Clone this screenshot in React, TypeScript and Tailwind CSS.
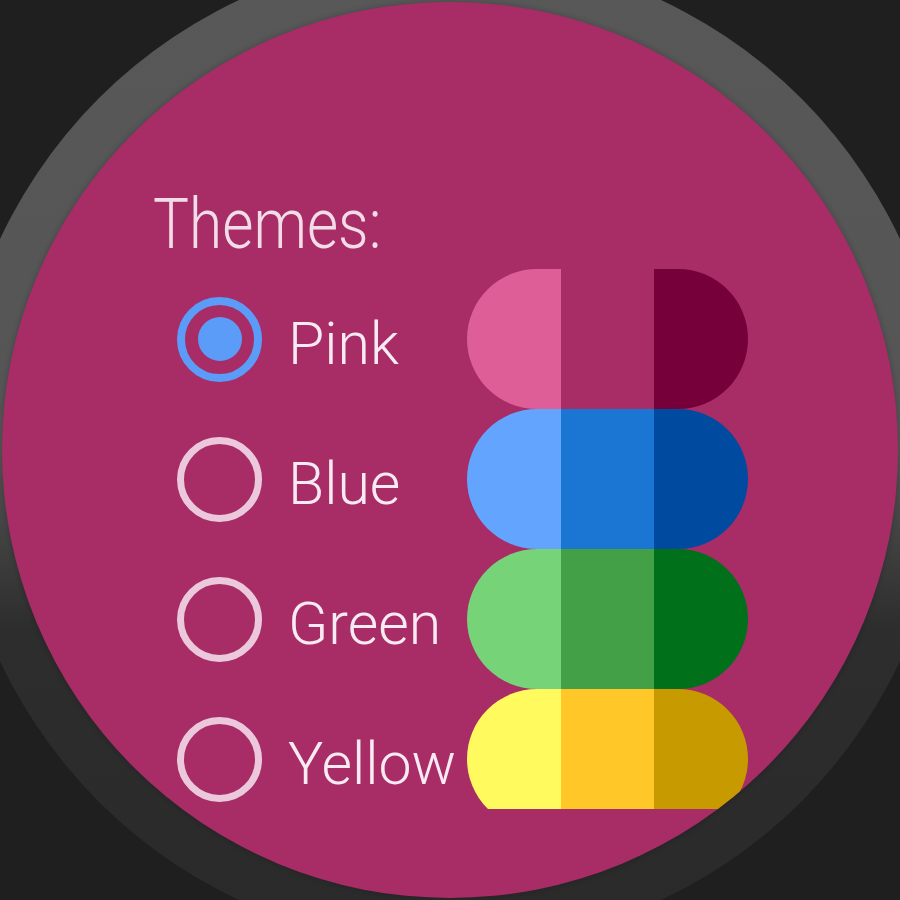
type Theme = {
  name: string;
  light: string;
  mid: string;
  dark: string;
};

const themes: Theme[] = [
  { name: "Pink", light: "bg-[#de5f97]", mid: "bg-[#a82c66]", dark: "bg-[#75003a]" },
  { name: "Blue", light: "bg-[#63a4ff]", mid: "bg-[#1b76d3]", dark: "bg-[#004ba0]" },
  { name: "Green", light: "bg-[#76d378]", mid: "bg-[#43a047]", dark: "bg-[#00701a]" },
  { name: "Yellow", light: "bg-[#fffa5e]", mid: "bg-[#ffc828]", dark: "bg-[#c79a00]" },
];

const Radio = ({ checked }: { checked: boolean }) => {
  if (checked) {
    return (
      <div className="w-[85px] h-[85px] shrink-0 rounded-full border-[8px] border-[#5b9cf8] flex items-center justify-center">
        <div className="w-[44px] h-[44px] rounded-full bg-[#5b9cf8]" />
      </div>
    );
  }
  return <div className="w-[85px] h-[85px] shrink-0 rounded-full border-[7px] border-[#ecc8dc]" />;
};

const App = () => {
  return (
    <div className="w-[900px] h-[900px] bg-[#1f1f1f] overflow-hidden flex items-center justify-center font-['Roboto','Noto_Sans',sans-serif]">
      <div className="w-[994px] h-[994px] shrink-0 rounded-full bg-[linear-gradient(to_bottom,#585858_0%,#555555_50%,#2d2d2d_68%,#2a2a2a_100%)] flex items-center justify-center">
        <div className="w-[896px] h-[896px] shrink-0 rounded-full bg-[#a82c66] overflow-hidden shadow-[0_0_4px_2px_rgba(0,0,0,0.12)]">
          <div className="pt-[186px] pl-[151px]">
            <p className="inline-block text-[71px] leading-none font-light text-[#f1dce8] scale-x-[0.85] origin-left whitespace-nowrap">
              Themes:
            </p>
          </div>
          <div className="mt-[10px] h-[540px] overflow-hidden pl-[175px]">
            {themes.map((theme, index) => (
              <div className="h-[140px] flex items-center" key={theme.name}>
                <Radio checked={index === 0} />
                <div className="w-[205px] pl-[26px] mt-[9px] text-[59px] leading-none font-light text-[#f8eaf2] whitespace-nowrap">
                  {theme.name}
                </div>
                <div className="w-[281px] h-[140px] shrink-0 rounded-full overflow-hidden flex">
                  <div className={`flex-1 ${theme.light}`} />
                  <div className={`flex-1 ${theme.mid}`} />
                  <div className={`flex-1 ${theme.dark}`} />
                </div>
              </div>
            ))}
          </div>
        </div>
      </div>
    </div>
  );
};

export default App;
